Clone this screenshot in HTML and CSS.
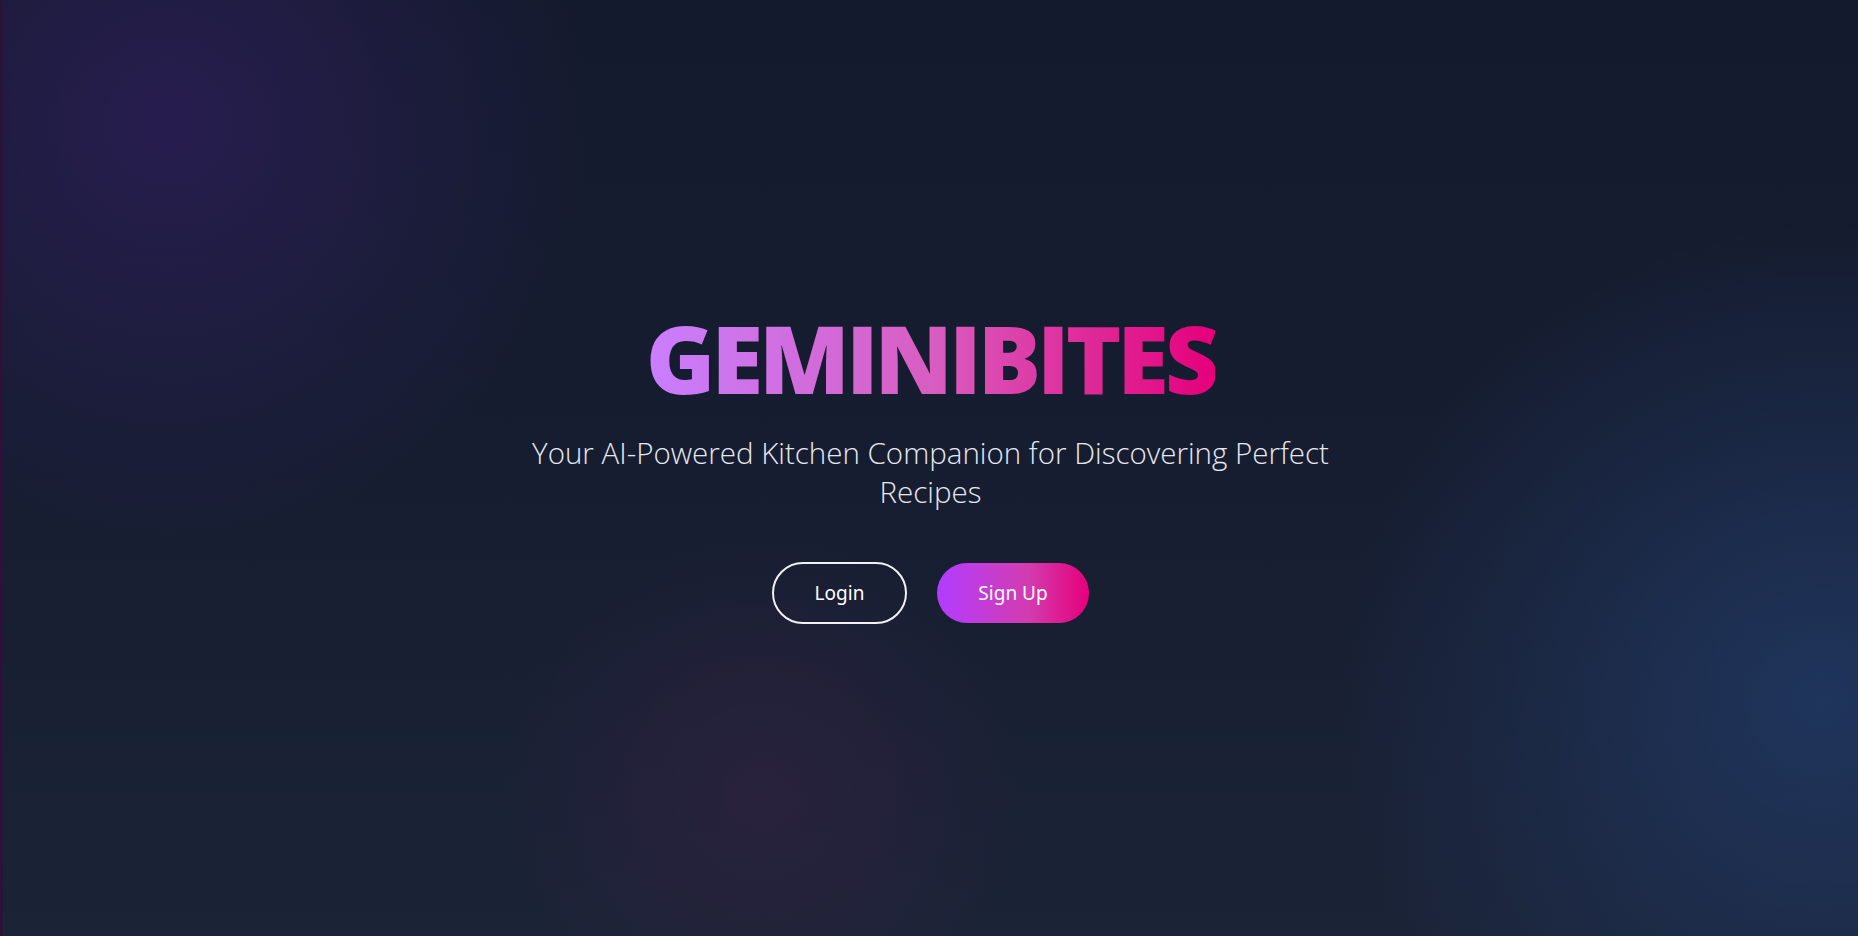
FILE: index.html
```html
<!DOCTYPE html>
<html lang="en">
<head>
<meta charset="utf-8">
<title>GeminiBites</title>
<link rel="stylesheet" href="styles.css">
</head>
<body>
<div class="edge"></div>
<main class="hero">
  <h1 class="brand">GEMINIBITES</h1>
  <p class="tagline">Your AI-Powered Kitchen Companion for Discovering Perfect Recipes</p>
  <div class="actions">
    <button class="btn btn-outline">Login</button>
    <button class="btn btn-fill">Sign Up</button>
  </div>
</main>
</body>
</html>
```
FILE: styles.css
```css
html, body {
  margin: 0;
  padding: 0;
  height: 100%;
}
body {
  display: flex;
  min-height: 936px;
  font-family: "Open Sans", "Noto Sans", sans-serif;
  color: #fff;
  background:
    radial-gradient(circle at 9% 13%, rgba(45, 30, 90, 0.75) 0, rgba(45, 30, 90, 0) 420px),
    radial-gradient(circle at 98% 75%, rgba(33, 58, 102, 0.8) 0, rgba(33, 58, 102, 0) 480px),
    radial-gradient(circle at 41% 85%, rgba(52, 34, 66, 0.6) 0, rgba(52, 34, 66, 0) 260px),
    linear-gradient(180deg, #141a2d 0%, #161d31 50%, #1b2337 100%);
  overflow: hidden;
}
.edge {
  width: 3px;
  flex: none;
  background: #2b1237;
}
.hero {
  flex: 1;
  display: flex;
  flex-direction: column;
  align-items: center;
  justify-content: center;
  text-align: center;
  padding-bottom: 3px;
}
.brand {
  margin: 0;
  font-family: "Open Sans", sans-serif;
  font-weight: 800;
  font-size: 94px;
  line-height: 1.05;
  letter-spacing: -4px;
  background: linear-gradient(90deg, #c97eff 0%, #d85ec0 50%, #e5007a 100%);
  -webkit-background-clip: text;
  background-clip: text;
  color: transparent;
}
.tagline {
  margin: 26px 0 0;
  max-width: 830px;
  font-family: "Open Sans", sans-serif;
  font-weight: 300;
  font-size: 29.5px;
  line-height: 39px;
  color: #e6e8ef;
}
.actions {
  display: flex;
  gap: 30px;
  align-items: center;
  margin-top: 51px;
}
.btn {
  font-family: "Noto Sans", "Open Sans", sans-serif;
  font-size: 19px;
  color: #fff;
  border-radius: 999px;
  cursor: pointer;
}
.btn-outline {
  width: 135px;
  height: 62px;
  background: transparent;
  border: 2px solid #f2f2f2;
}
.btn-fill {
  width: 152px;
  height: 60px;
  border: none;
  background: linear-gradient(90deg, #b23cff 0%, #d33cb0 60%, #e5007a 100%);
}
```
